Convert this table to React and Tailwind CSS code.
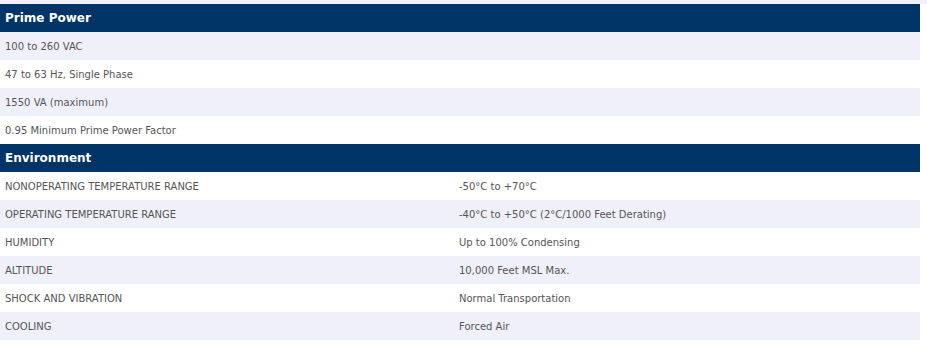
export default function App() {
  const power = [
    "100 to 260 VAC",
    "47 to 63 Hz, Single Phase",
    "1550 VA (maximum)",
    "0.95 Minimum Prime Power Factor",
  ];
  const env = [
    ["NONOPERATING TEMPERATURE RANGE", "-50°C to +70°C"],
    ["OPERATING TEMPERATURE RANGE", "-40°C to +50°C (2°C/1000 Feet Derating)"],
    ["HUMIDITY", "Up to 100% Condensing"],
    ["ALTITUDE", "10,000 Feet MSL Max."],
    ["SHOCK AND VIBRATION", "Normal Transportation"],
    ["COOLING", "Forced Air"],
  ];
  return (
    <div className="w-[927px] h-[351px] bg-white text-[#555555] text-[10px] font-['DejaVu_Sans',sans-serif]">
      <div className="h-[4px] bg-[#f0f0fa]" />
      <div className="w-[920px]">
        <div className="h-[28px] bg-[#003366] text-white text-[12px] font-bold flex items-center px-[5px]">
          Prime Power
        </div>
        {power.map((t, i) => (
          <div
            key={t}
            className={`h-[28px] flex items-center px-[5px] ${i % 2 === 0 ? "bg-[#f0f0fa]" : "bg-white"}`}
          >
            {t}
          </div>
        ))}
        <div className="h-[28px] bg-[#003366] text-white text-[12px] font-bold flex items-center px-[5px]">
          Environment
        </div>
        {env.map(([a, b], i) => (
          <div
            key={a}
            className={`h-[28px] flex items-center ${i % 2 === 1 ? "bg-[#f0f0fa]" : "bg-white"}`}
          >
            <div className="w-[454px] px-[5px]">{a}</div>
            <div className="px-[5px]">{b}</div>
          </div>
        ))}
      </div>
    </div>
  );
}
